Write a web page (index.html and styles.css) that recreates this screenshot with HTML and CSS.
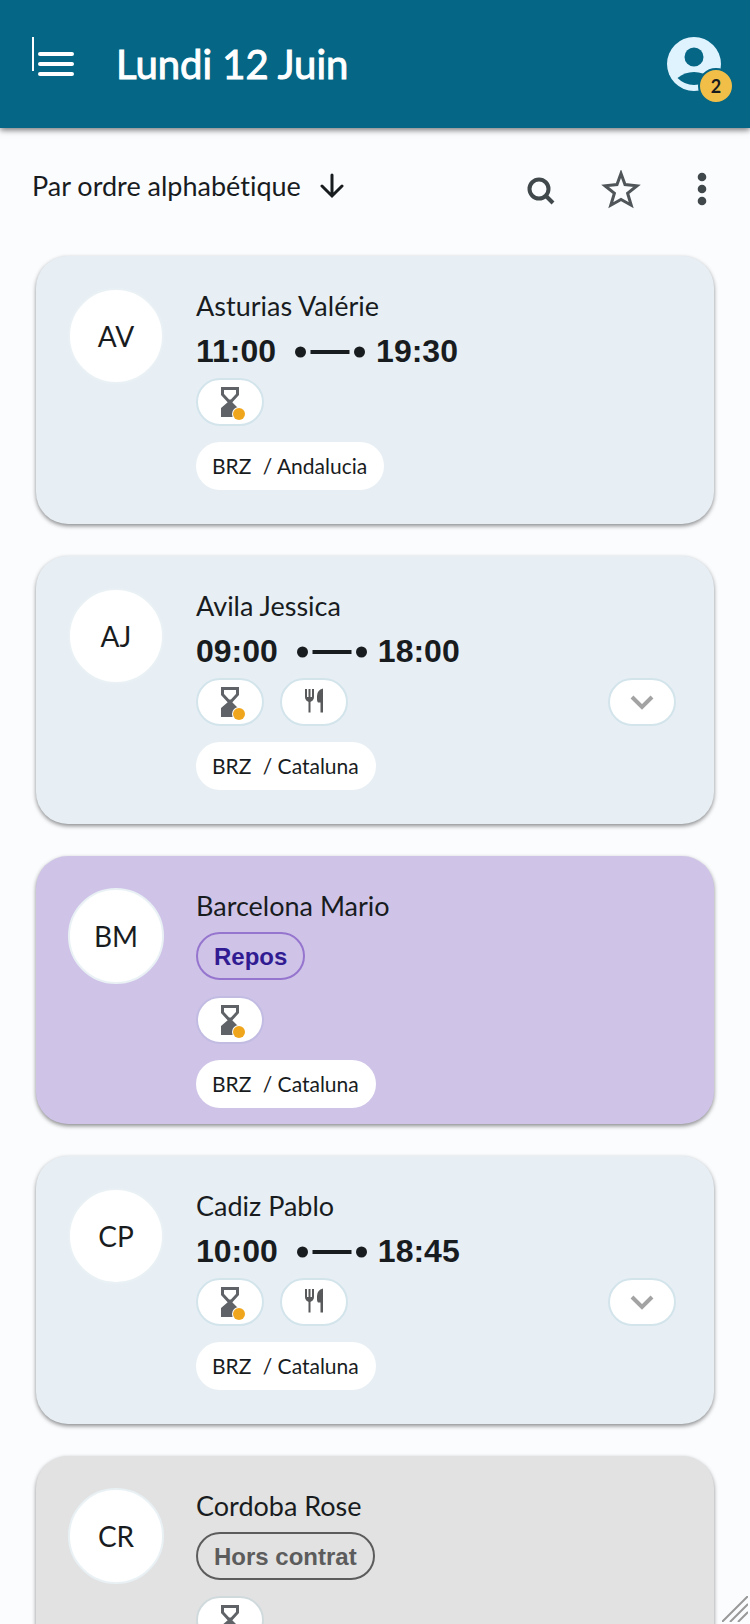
FILE: index.html
```html
<!DOCTYPE html>
<html lang="fr">
<head>
<meta charset="utf-8">
<meta name="viewport" content="width=device-width, initial-scale=1">
<title>Lundi 12 Juin</title>
<link rel="stylesheet" href="styles.css">
</head>
<body>
<svg class="defs" aria-hidden="true">
  <symbol id="hourglass" viewBox="0 0 28 36">
    <path d="M3.500 4.500h15v6l-6 6.500h-3l-6-6.500z" fill="none" stroke="#5f6368" stroke-width="3"/>
    <path d="M9 16h4v2l7 7v8H2v-9l7-6z" fill="#5f6368"/>
    <circle cx="20" cy="30" r="7" fill="#fff"/>
    <circle cx="20" cy="30" r="6" fill="#f0a61c"/>
  </symbol>
  <symbol id="meal" viewBox="0 0 20 26">
    <path d="M2 1v8q0 3 3.500 4M9 1v8q0 3-3.500 4M5.500 1v23.500" fill="none" stroke="#58595b" stroke-width="2"/>
    <path d="M2 9h7v3l-3.500 2L2 12z" fill="#58595b"/>
    <path d="M19 .5v24h-2.500V14.500H14q-1-1-1-3V8q0-6 6-7.500z" fill="#58595b"/>
  </symbol>
  <symbol id="range" viewBox="0 0 70 14">
    <g fill="#191c1e"><circle cx="5.500" cy="8" r="5.500"/><path d="M15.500 6h39v4h-39z"/><circle cx="64.500" cy="8" r="5.500"/></g>
  </symbol>
  <symbol id="chevron" viewBox="0 0 24 16">
    <path d="m2 3 10 10L22 3" fill="none" stroke="#a3a3a3" stroke-width="4"/>
  </symbol>
</svg>

<header class="topbar">
  <button class="menu" aria-label="Menu">
    <svg width="36" height="26" viewBox="0 0 36 26"><path d="M2 3h32M2 13h32M2 23h32" stroke="#fff" stroke-width="4" stroke-linecap="round"/></svg>
  </button>
  <h1 class="title">Lundi 12 Juin</h1>
  <button class="account" aria-label="Compte">
    <svg width="54" height="54" viewBox="0 0 54 54"><circle cx="27" cy="27" r="27" fill="#dff3ff"/><circle cx="27" cy="20" r="9.500" fill="#056685"/><path d="M10.500 41q7-6 16.500-6t16.500 6q-7 7-16.500 7t-16.500-7z" fill="#056685"/></svg>
    <span class="count">2</span>
  </button>
</header>

<main>
  <div class="tools">
    <button class="sort">Par ordre alphabétique
      <svg width="24" height="26" viewBox="0 0 24 26"><path d="M12 2v20M2 13l10 10 10-10" fill="none" stroke="#191c1e" stroke-width="3" stroke-linecap="round"/></svg>
    </button>
    <div class="actions">
      <button aria-label="Rechercher"><svg width="40" height="40" viewBox="0 0 40 40"><circle cx="19" cy="19" r="9.500" fill="none" stroke="#40484c" stroke-width="4"/><path d="m26 26 7 7" stroke="#40484c" stroke-width="4"/></svg></button>
      <button aria-label="Favoris"><svg width="40" height="40" viewBox="0 0 40 40"><path d="m20 3.500 4 11 12 1.300-9.400 7.400 3.600 12L20 29.500 9.800 35.200l3.600-12L4 15.800l12-1.300z" fill="none" stroke="#4f5558" stroke-width="3"/></svg></button>
      <button aria-label="Plus d’options"><svg width="40" height="40" viewBox="0 0 40 40" fill="#40484c"><circle cx="20" cy="7" r="4.300"/><circle cx="20" cy="19" r="4.300"/><circle cx="20" cy="31" r="4.300"/></svg></button>
    </div>
  </div>

  <section class="list">
    <article class="card">
      <div class="avatar">AV</div>
      <div class="info">
        <h2 class="name">Asturias Valérie</h2>
        <p class="hours">11:00 <svg class="range"><use href="#range"/></svg> 19:30</p>
        <div class="chips">
          <span class="chip"><svg class="hourglass"><use href="#hourglass"/></svg></span>
        </div>
        <p class="place"><span>BRZ</span> / Andalucia</p>
      </div>
    </article>

    <article class="card">
      <div class="avatar">AJ</div>
      <div class="info">
        <h2 class="name">Avila Jessica</h2>
        <p class="hours">09:00 <svg class="range"><use href="#range"/></svg> 18:00</p>
        <div class="chips">
          <span class="chip"><svg class="hourglass"><use href="#hourglass"/></svg></span>
          <span class="chip"><svg class="meal"><use href="#meal"/></svg></span>
          <button class="chip more" aria-label="Détails"><svg class="chevron"><use href="#chevron"/></svg></button>
        </div>
        <p class="place"><span>BRZ</span> / Cataluna</p>
      </div>
    </article>

    <article class="card rest">
      <div class="avatar">BM</div>
      <div class="info">
        <h2 class="name">Barcelona Mario</h2>
        <p class="status">Repos</p>
        <div class="chips">
          <span class="chip"><svg class="hourglass"><use href="#hourglass"/></svg></span>
        </div>
        <p class="place"><span>BRZ</span> / Cataluna</p>
      </div>
    </article>

    <article class="card">
      <div class="avatar">CP</div>
      <div class="info">
        <h2 class="name">Cadiz Pablo</h2>
        <p class="hours">10:00 <svg class="range"><use href="#range"/></svg> 18:45</p>
        <div class="chips">
          <span class="chip"><svg class="hourglass"><use href="#hourglass"/></svg></span>
          <span class="chip"><svg class="meal"><use href="#meal"/></svg></span>
          <button class="chip more" aria-label="Détails"><svg class="chevron"><use href="#chevron"/></svg></button>
        </div>
        <p class="place"><span>BRZ</span> / Cataluna</p>
      </div>
    </article>

    <article class="card off">
      <div class="avatar">CR</div>
      <div class="info">
        <h2 class="name">Cordoba Rose</h2>
        <p class="status">Hors contrat</p>
        <div class="chips">
          <span class="chip"><svg class="hourglass"><use href="#hourglass"/></svg></span>
        </div>
      </div>
    </article>
  </section>
</main>
<svg class="grip" viewBox="0 0 26 26" aria-hidden="true"><path d="M0 26 26 0M8 26 26 8M16 26 26 16" stroke="#999" stroke-width="2"/></svg>
</body>
</html>
```

FILE: styles.css
```css
* { box-sizing: border-box; }
html { height: 100%; overflow: hidden; }
body {
  height: 100%;
  margin: 0;
  display: flex;
  flex-direction: column;
  overflow: hidden;
  background: #fbfcfe;
  color: #191c1e;
  font-family: Lato, "Open Sans", sans-serif;
  font-variant-ligatures: none;
}
h1, h2, p { margin: 0; font-weight: 400; }
button {
  padding: 0;
  border: 0;
  background: none;
  color: inherit;
  font: inherit;
}
svg { display: block; flex: none; }
.defs { position: absolute; width: 0; height: 0; }

.topbar {
  position: relative;
  flex: none;
  display: flex;
  align-items: center;
  height: 128px;
  padding: 0 29px 0 32px;
  background: #056685;
  color: #fff;
  box-shadow: 0 2px 6px rgba(0, 0, 0, .55);
}
.menu {
  height: 54px;
  display: flex;
  align-items: center;
}
.menu::before {
  content: "";
  align-self: flex-start;
  width: 2px;
  height: 34px;
  margin-right: 4px;
  background: #fff;
}
.title {
  margin-left: 42px;
  font-size: 40px;
  line-height: 54px;
  -webkit-text-stroke: 1px currentColor;
}
.account { position: relative; margin-left: auto; }
.count {
  position: absolute;
  left: 31px;
  top: 31px;
  width: 36px;
  height: 36px;
  border: 2px solid #056685;
  border-radius: 50%;
  background: #f1bf48;
  color: #191c1e;
  font-size: 18px;
  font-weight: 700;
  line-height: 32px;
  text-align: center;
}

main { flex: 1; min-height: 0; overflow: hidden; }
.tools {
  display: flex;
  align-items: center;
  justify-content: space-between;
  height: 128px;
  padding: 0 28px 12px 32px;
}
.sort {
  display: flex;
  align-items: center;
  gap: 19px;
  font-size: 27px;
  line-height: 36px;
}
.actions {
  display: flex;
  gap: 41px;
  padding-top: 8px;
}

.list {
  display: flex;
  flex-direction: column;
  gap: 32px;
  padding: 0 36px;
}
.card {
  display: flex;
  gap: 32px;
  min-height: 268px;
  padding: 32px 38px 16px 32px;
  border-radius: 32px;
  background: #e7eff5;
  box-shadow: 0 2px 4px rgba(0, 0, 0, .45);
}
.card.rest { background: #cfc4e8; }
.card.off { background: #e2e2e2; }
.avatar {
  flex: none;
  width: 96px;
  height: 96px;
  border: 2px solid #e9f1f5;
  border-radius: 50%;
  background: #fff;
  font-size: 28px;
  line-height: 92px;
  text-align: center;
}
.info { flex: 1; min-width: 0; }
.name {
  font-size: 27px;
  line-height: 36px;
}
.hours {
  display: flex;
  align-items: center;
  height: 54px;
  font: bold 32px/54px "Liberation Sans", Arial, sans-serif;
}
.range {
  width: 70px;
  height: 14px;
  margin: 0 11px 0 19px;
}
.chips { display: flex; gap: 16px; }
.chip {
  display: flex;
  align-items: center;
  justify-content: center;
  width: 68px;
  height: 48px;
  border: 2px solid #d3e4eb;
  border-radius: 24px;
  background: #fff;
}
.rest .chip { border-color: #c2bce3; }
.off .chip { border-color: #d0dadd; }
.more { margin-left: auto; }
.hourglass { width: 28px; height: 36px; margin-left: 6px; }
.meal { width: 20px; height: 26px; margin-bottom: 2px; }
.chevron { width: 24px; height: 16px; }
.status {
  width: fit-content;
  height: 48px;
  margin: 8px 0 16px;
  padding: 0 16px;
  border: 2px solid #9575cd;
  border-radius: 24px;
  color: #311b92;
  font: bold 24px/45px "Liberation Sans", Arial, sans-serif;
}
.off .status { border-color: #5c5c5c; color: #5c5c5c; }
.place {
  width: fit-content;
  height: 48px;
  margin-top: 16px;
  padding: 0 17px 0 16px;
  border-radius: 24px;
  background: #fff;
  font-size: 21px;
  line-height: 48px;
}
.place span { margin-right: 6px; }
.grip {
  position: fixed;
  right: 2px;
  bottom: 2px;
  width: 26px;
  height: 26px;
}
```
